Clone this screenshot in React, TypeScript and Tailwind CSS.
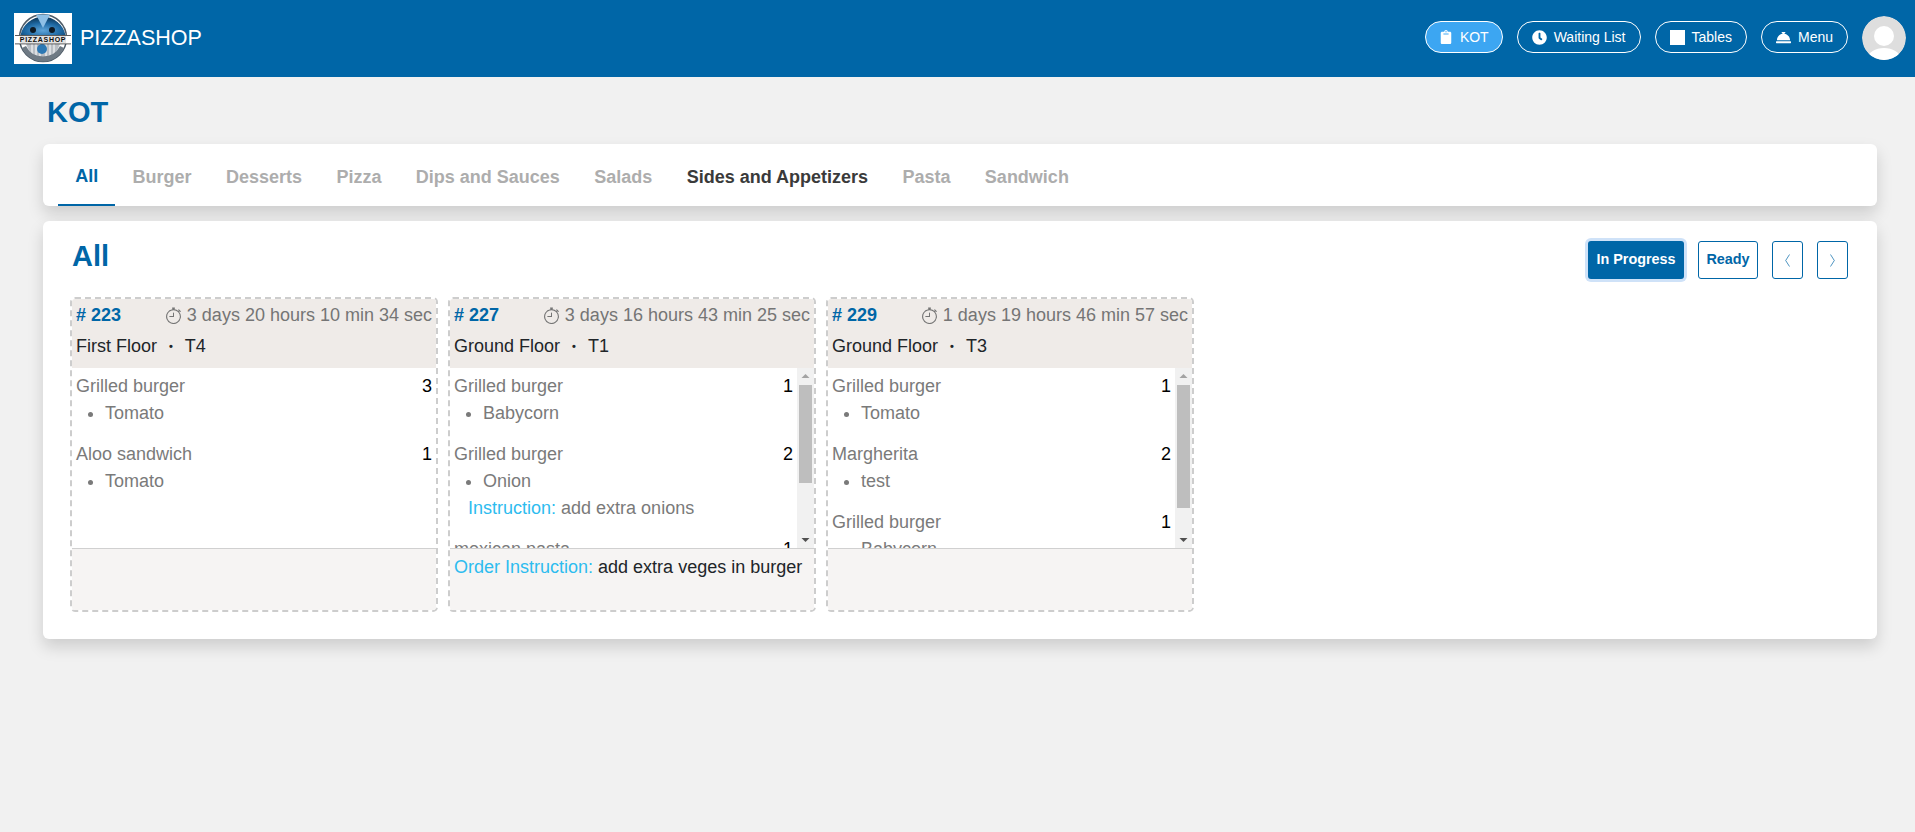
import { BsStopwatch } from "react-icons/bs";
import { FaClipboard, FaClock, FaConciergeBell } from "react-icons/fa";

const tabs = ["All", "Burger", "Desserts", "Pizza", "Dips and Sauces", "Salads", "Sides and Appetizers", "Pasta", "Sandwich"];

type Item = { name: string; qty: number; mods: string[]; note?: string };
type Order = { id: number; time: string; floor: string; table: string; note?: string; thumb?: number; items: Item[] };

const orders: Order[] = [
    {
        id: 223,
        time: "3 days 20 hours 10 min 34 sec",
        floor: "First Floor",
        table: "T4",
        items: [
            { name: "Grilled burger", qty: 3, mods: ["Tomato"] },
            { name: "Aloo sandwich", qty: 1, mods: ["Tomato"] },
        ],
    },
    {
        id: 227,
        time: "3 days 16 hours 43 min 25 sec",
        floor: "Ground Floor",
        table: "T1",
        note: "add extra veges in burger",
        thumb: 98,
        items: [
            { name: "Grilled burger", qty: 1, mods: ["Babycorn"] },
            { name: "Grilled burger", qty: 2, mods: ["Onion"], note: "add extra onions" },
            { name: "mexican pasta", qty: 1, mods: ["Tomato", "Onion"] },
        ],
    },
    {
        id: 229,
        time: "1 days 19 hours 46 min 57 sec",
        floor: "Ground Floor",
        table: "T3",
        thumb: 123,
        items: [
            { name: "Grilled burger", qty: 1, mods: ["Tomato"] },
            { name: "Margherita", qty: 2, mods: ["test"] },
            { name: "Grilled burger", qty: 1, mods: ["Babycorn"] },
        ],
    },
];

const Logo = () => (
    <svg width="58" height="51" viewBox="0 0 58 51" className="shrink-0 bg-white">
        <defs>
            <radialGradient id="logoTop" cx="50%" cy="75%" r="65%">
                <stop offset="0%" stopColor="#5fa4d8" />
                <stop offset="60%" stopColor="#1f6aa5" />
                <stop offset="100%" stopColor="#0f3f66" />
            </radialGradient>
        </defs>
        <circle cx="29" cy="25" r="23.500" fill="#fff" stroke="#4d5a66" strokeWidth="1.500" />
        <path d="M6.500 22 A23 23 0 0 1 51.500 22 Z" fill="url(#logoTop)" />
        <path d="M22 1.500 H36 L29 15 Z" fill="#8fc0e6" />
        <circle cx="19" cy="17" r="3" fill="#0d1a26" />
        <circle cx="38" cy="17" r="3" fill="#0d1a26" />
        <path d="M12 31 H46 L40 44 H18 Z" fill="#b9bec4" />
        <path d="M18 31 V42 M22 31 V45 M26 31 V46 M32 31 V46 M36 31 V45 M40 31 V42" stroke="#fff" strokeWidth="1" />
        <path d="M8 35 A23 23 0 0 0 50 35 L46 33 A19 19 0 0 1 12 33 Z" fill="#6f7a84" />
        <circle cx="28" cy="36" r="5" fill="#2c78b4" />
        <rect x="1" y="22" width="56" height="9" fill="#fff" />
        <rect x="1" y="22" width="56" height="0.800" fill="#333" />
        <rect x="1" y="30.500" width="56" height="0.800" fill="#333" />
        <rect x="6" y="23" width="46" height="7" fill="#e2e2e2" />
        <text x="29" y="29" textAnchor="middle" fontFamily="'Liberation Sans', sans-serif" fontWeight="700" fontSize="7" letterSpacing="0.7" fill="#111">PIZZASHOP</text>
    </svg>
);

const Avatar = () => (
    <svg width="44" height="44" viewBox="0 0 44 44" className="rounded-full">
        <circle cx="22" cy="22" r="22" fill="#dedede" />
        <circle cx="22" cy="20" r="10" fill="#fff" />
        <ellipse cx="22" cy="42" rx="16" ry="10" fill="#fff" />
    </svg>
);

const NavButton = ({ label, icon, active }: { label: string; icon: React.ReactNode; active?: boolean }) => (
    <button type="button" className={`flex items-center gap-[7px] h-8 mb-[2px] rounded-full border border-white text-white text-[14px] ${active ? "bg-[#3ca6f2] px-[13px]" : "px-[14px]"}`}>
        {icon}
        {label}
    </button>
);

// headless browser hides native scrollbars, so this one is painted over the list
const ScrollBar = ({ thumb }: { thumb: number }) => (
    <div className="absolute right-0 top-0 bottom-0 w-[17px] bg-[#f1f1f1] flex flex-col items-center">
        <svg width="9" height="17" viewBox="0 0 9 17" className="shrink-0">
            <path d="M4.500 6 L8.500 10 H0.500 Z" fill="#a3a3a3" />
        </svg>
        <div className="w-[13px] bg-[#bebebe]" style={{ height: thumb }} />
        <svg width="9" height="17" viewBox="0 0 9 17" className="shrink-0 mt-auto">
            <path d="M4.500 11 L8.500 7 H0.500 Z" fill="#505050" />
        </svg>
    </div>
);

const OrderCard = ({ order }: { order: Order }) => (
    <div className="w-[368px] h-[315px] flex flex-col rounded-[5px] border-2 border-dashed border-[#cdcdcd] overflow-hidden">
        <div className="h-[69px] shrink-0 bg-[#efebe8] px-[4px] pt-[3px]">
            <div className="flex justify-between items-center h-[27px]">
                <span className="font-bold text-[#0066a7]"># {order.id}</span>
                <span className="flex items-center gap-[5px] text-[#757575]">
                    <BsStopwatch className="text-[17px] text-[#757575]" />
                    {order.time}
                </span>
            </div>
            <div className="flex items-center h-[27px] mt-[4px] text-[#212529]">
                {order.floor}
                <span className="mx-[12px] font-bold text-[11px]">•</span>
                {order.table}
            </div>
        </div>
        <div className="relative h-[181px] shrink-0 overflow-hidden bg-white pl-[4px] pr-[4px] pt-[5px] border-b border-[#d0d0d0] box-border">
            <div className={order.thumb ? "mr-[17px]" : ""}>
                {order.items.map((item, i) => (
                    <div key={i} className="pb-[14px] last:pb-0">
                        <div className="flex justify-between h-[27px] items-center">
                            <span className="text-[#7a7a7a]">{item.name}</span>
                            <span className="text-black">{item.qty}</span>
                        </div>
                        <ul className="list-disc pl-[29px] text-[#7a7a7a] marker:text-[#7a7a7a]">
                            {item.mods.map((mod) => (
                                <li key={mod} className="h-[27px] leading-[27px]">{mod}</li>
                            ))}
                        </ul>
                        {item.note && (
                            <div className="h-[27px] leading-[27px] pl-[14px] text-[#7a7a7a]">
                                <span className="text-[#2dbcef]">Instruction:</span> {item.note}
                            </div>
                        )}
                    </div>
                ))}
            </div>
            {order.thumb && <ScrollBar thumb={order.thumb} />}
        </div>
        <div className="flex-1 bg-[#f6f4f3] px-[4px] pt-[5px]">
            {order.note && (
                <div className="h-[27px] leading-[27px] text-[#212529]">
                    <span className="text-[#2dbcef]">Order Instruction:</span> {order.note}
                </div>
            )}
        </div>
    </div>
);

const App = () => {
    return (
        <div className="min-h-screen bg-[#f1f1f1] font-['Liberation_Sans',Arial,sans-serif] text-[18px]">
            <header className="h-[77px] bg-[#0066a7] flex items-center justify-between pl-[14px] pr-[9px] pb-[1px]">
                <div className="flex items-center gap-[8px]">
                    <Logo />
                    <span className="text-white text-[21.5px]">PIZZASHOP</span>
                </div>
                <div className="flex items-center gap-[14px]">
                    <NavButton active label="KOT" icon={<FaClipboard className="text-[14px]" />} />
                    <NavButton label="Waiting List" icon={<FaClock className="text-[15px]" />} />
                    <NavButton label="Tables" icon={<span className="block w-[15px] h-[15px] bg-white" />} />
                    <NavButton label="Menu" icon={<FaConciergeBell className="text-[15px]" />} />
                    <Avatar />
                </div>
            </header>

            <main className="pl-[43px] pr-[38px]">
                <h1 className="pl-[4px] pt-[18px] h-[67px] text-[29px] leading-[34px] font-bold text-[#0066a7]">KOT</h1>

                <nav className="h-[62px] bg-white rounded-[6px] shadow-[0_8px_16px_rgba(0,0,0,0.15)] flex items-stretch px-[15px]">
                    {tabs.map((tab) => (
                        <a
                            key={tab}
                            className={`flex items-center pt-[5px] px-[17.2px] font-bold ${tab === "All" ? "text-[#0066a7] border-b-2 border-[#0066a7]" : tab === "Sides and Appetizers" ? "text-[#3a3a3a]" : "text-[#adadad]"}`}
                        >
                            {tab}
                        </a>
                    ))}
                </nav>

                <section className="mt-[15px] h-[418px] bg-white rounded-[6px] shadow-[0_8px_16px_rgba(0,0,0,0.15)] pl-[27px] pr-[29px] pt-[20px]">
                    <div className="flex justify-between h-[56px]">
                        <h2 className="pl-[2px] text-[29px] leading-[30px] font-bold text-[#0066a7]">All</h2>
                        <div className="flex gap-[14px] h-[38px] text-[14.4px] font-bold">
                            <button type="button" className="w-[96px] rounded-[3px] bg-[#0066a7] text-white ring-[3px] ring-[#cfe2f8]">In Progress</button>
                            <button type="button" className="w-[60px] rounded-[3px] border border-[#0066a7] text-[#0066a7]">Ready</button>
                            <button type="button" className="w-[31px] flex items-center justify-center rounded-[3px] border border-[#0066a7]">
                                <svg width="5" height="13" viewBox="0 0 5 13" fill="none" stroke="#0066a7" strokeOpacity="0.7">
                                    <path d="M4.500 0.500 L0.700 6.500 L4.500 12.500" />
                                </svg>
                            </button>
                            <button type="button" className="w-[31px] flex items-center justify-center rounded-[3px] border border-[#0066a7]">
                                <svg width="5" height="13" viewBox="0 0 5 13" fill="none" stroke="#0066a7" strokeOpacity="0.7">
                                    <path d="M0.500 0.500 L4.300 6.500 L0.500 12.500" />
                                </svg>
                            </button>
                        </div>
                    </div>
                    <div className="flex gap-[10px]">
                        {orders.map((order) => (
                            <OrderCard key={order.id} order={order} />
                        ))}
                    </div>
                </section>
            </main>
        </div>
    );
};

export default App;
